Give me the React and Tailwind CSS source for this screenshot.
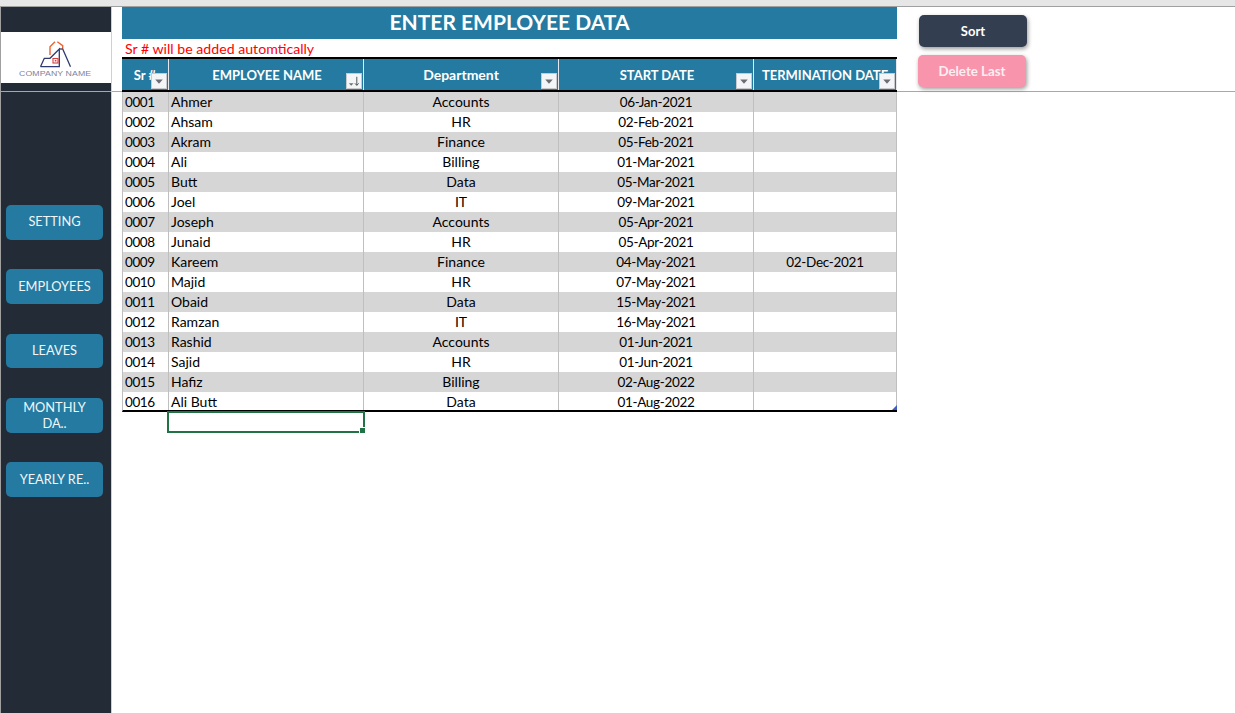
const employees = [
  ['0001', 'Ahmer', 'Accounts', '06-Jan-2021', ''],
  ['0002', 'Ahsam', 'HR', '02-Feb-2021', ''],
  ['0003', 'Akram', 'Finance', '05-Feb-2021', ''],
  ['0004', 'Ali', 'Billing', '01-Mar-2021', ''],
  ['0005', 'Butt', 'Data', '05-Mar-2021', ''],
  ['0006', 'Joel', 'IT', '09-Mar-2021', ''],
  ['0007', 'Joseph', 'Accounts', '05-Apr-2021', ''],
  ['0008', 'Junaid', 'HR', '05-Apr-2021', ''],
  ['0009', 'Kareem', 'Finance', '04-May-2021', '02-Dec-2021'],
  ['0010', 'Majid', 'HR', '07-May-2021', ''],
  ['0011', 'Obaid', 'Data', '15-May-2021', ''],
  ['0012', 'Ramzan', 'IT', '16-May-2021', ''],
  ['0013', 'Rashid', 'Accounts', '01-Jun-2021', ''],
  ['0014', 'Sajid', 'HR', '01-Jun-2021', ''],
  ['0015', 'Hafiz', 'Billing', '02-Aug-2022', ''],
  ['0016', 'Ali Butt', 'Data', '01-Aug-2022', ''],
]

const navItems = [
  { label: 'SETTING', cls: 'h-[35px] pb-[1px]' },
  { label: 'EMPLOYEES', cls: 'h-[35px] mt-[29px]' },
  { label: 'LEAVES', cls: 'h-[34px] mt-[30px] pb-[1px]' },
  { label: 'MONTHLY DA..', cls: 'h-[35px] mt-[30px] pb-[1px] px-[14px] leading-[16px]' },
  { label: 'YEARLY RE..', cls: 'h-[35px] mt-[29px]' },
]

// Excel autofilter dropdown, with the sort arrow on the sorted column
function FilterButton({ sorted }) {
  return (
    <div className="absolute right-[1px] bottom-[1px] w-[16px] h-[16px] bg-[#f4f5f7] border border-[#c6c9ce] flex items-center justify-center">
      <svg width="14" height="14" viewBox="0 0 15 15">
        {sorted ? (
          <>
            <path d="M2 10h5l-2.500 2.500z" fill="#6b6f75" />
            <path d="M10.500 3v9M8.500 10l2 2.200 2-2.200" fill="none" stroke="#45494f" strokeWidth="1" />
          </>
        ) : (
          <path d="M3.500 6h8L7.500 10.500z" fill="#6b6f75" />
        )}
      </svg>
    </div>
  )
}

function Logo() {
  return (
    <div className="flex flex-col items-center pt-[3px]">
      <svg width="33" height="27" viewBox="0 0 33 27" className="mb-[1px]">
        <path d="M10 14V5.700L15 .7M17.300 .7l5.400 4V8" fill="none" stroke="#f0622f" strokeWidth="1.400" />
        <path d="M.5 25.700L4.300 17.300H10L19.300 8V25.700H.5M22.700 8L30.500 25.700" fill="none" stroke="#2f3a73" strokeWidth="1.300" />
        <path d="M19.300 8H22.700" fill="none" stroke="#2f3a73" strokeWidth="1.300" />
        <rect x="13" y="17.500" width="5" height="4.500" fill="none" stroke="#d93d3d" strokeWidth="1.100" />
        <rect x="14.800" y="19" width="1.600" height="1.500" fill="#d93d3d" />
      </svg>
      <div className="font-['Liberation_Sans',sans-serif] text-[8px] leading-[9px] tracking-[0.1px] text-[#7d82a0] scale-x-[1.09] -translate-x-[1px]">
        COMPANY NAME
      </div>
    </div>
  )
}

function Sidebar() {
  return (
    <aside className="w-[112px] shrink-0 bg-[#222b36] border-l border-l-[#a0a0a0] border-r border-r-[#d0d0d0]">
      <div className="h-[85px] pt-[25px] border-b border-[#a8a8a8]">
        <div className="h-[51px] bg-white flex items-center justify-center">
          <Logo />
        </div>
      </div>
      <nav className="pt-[113px] pl-[5px] flex flex-col w-[102px]">
        {navItems.map(item => (
          <button
            key={item.label}
            className={`${item.cls} w-[97px] bg-[#247aa0] rounded-[5px] text-[#f2f6f8] text-[12.800px] text-center`}
          >
            {item.label}
          </button>
        ))}
      </nav>
    </aside>
  )
}

function HeaderCell({ width, children, sorted, pad = 'pt-[2px]' }) {
  return (
    <div className={`${width} ${pad} relative h-full shrink-0 border-r border-[#e4e8ec] flex items-center justify-center overflow-hidden whitespace-nowrap`}>
      {children}
      <FilterButton sorted={sorted} />
    </div>
  )
}

export default function App() {
  return (
    <div className="w-[1235px] h-[713px] overflow-hidden bg-white font-['Lato',sans-serif] text-[14px] text-black flex flex-col">
      <div className="h-[7px] shrink-0 bg-[#e6e6e6] border-b border-[#a0a0a0]" />
      <div className="flex flex-1 min-h-0">
        <Sidebar />
        <main className="flex-1 min-w-0">
          {/* frozen panes: title, note, header row and the two macro buttons */}
          <div className="h-[85px] flex border-b border-[#a8a8a8]">
            <div className="w-[775px] ml-[10px] shrink-0">
              <h1 className="h-[32px] bg-[#247aa0] text-white text-[21px] font-bold text-center leading-[30px]">
                ENTER EMPLOYEE DATA
              </h1>
              <div className="h-[18px] pl-[3px] pt-[1px] text-[#ff0000] text-[14.150px] leading-[18px]">
                Sr # will be added automtically
              </div>
              <div className="h-[35px] bg-[#247aa0] border-t-2 border-b-2 border-black flex text-white text-[13px] font-bold">
                <HeaderCell width="w-[47px]">Sr #</HeaderCell>
                <HeaderCell width="w-[195px]" pad="pt-[2px] pl-[2px]" sorted>EMPLOYEE NAME</HeaderCell>
                <HeaderCell width="w-[195px]" pad="pb-[1px]"><span className="text-[14px]">Department</span></HeaderCell>
                <HeaderCell width="w-[195px]" pad="pt-[2px] pl-[2px]">START DATE</HeaderCell>
                <HeaderCell width="w-[143px]">TERMINATION DATE</HeaderCell>
              </div>
            </div>
            <div className="ml-[22px] pt-[8px] flex flex-col items-start text-[13px] font-bold">
              <button className="w-[108px] h-[32px] pt-[2px] bg-[#343e51] rounded-[5px] text-white shadow-[1px_2px_4px_rgba(0,0,0,0.4)]">
                Sort
              </button>
              <button className="w-[108px] h-[32px] pt-[2px] -ml-[1px] mt-[8px] bg-[#f895ad] rounded-[5px] text-[13.300px] text-[#fdeef2] shadow-[1px_2px_4px_rgba(0,0,0,0.4)]">
                Delete Last
              </button>
            </div>
          </div>

          <div className="w-[775px] ml-[10px]">
            {employees.map((row, i) => (
              <div
                key={row[0]}
                className={`relative h-[20px] flex leading-[20px] border-l border-[#bfbfbf] ${i % 2 === 0 ? 'bg-[#d6d6d6]' : 'bg-white'} ${i === employees.length - 1 ? 'border-b-2 border-b-black' : ''}`}
              >
                <div className="w-[46px] pl-[2px] border-r border-[#bfbfbf] text-[13.500px] tracking-[-0.4px]">{row[0]}</div>
                <div className="w-[195px] pl-[2px] border-r border-[#bfbfbf]">{row[1]}</div>
                <div className="w-[195px] text-center border-r border-[#bfbfbf]">{row[2]}</div>
                <div className="w-[195px] text-center border-r border-[#bfbfbf] text-[13.500px] tracking-[-0.3px]">{row[3]}</div>
                <div className="w-[143px] text-center border-r border-[#bfbfbf] text-[13.500px] tracking-[-0.3px]">{row[4]}</div>
                {i === employees.length - 1 && (
                  <div className="absolute right-0 bottom-0 w-[5px] h-[5px] bg-[#3f5bc4] [clip-path:polygon(100%_0,100%_100%,0_100%)]" />
                )}
              </div>
            ))}
            {/* selected cell */}
            <div className="relative -mt-[1px] ml-[45px] w-[198px] h-[22px] border-2 border-[#217346]">
              <div className="absolute -right-[3px] -bottom-[3px] w-[5px] h-[5px] bg-[#217346] border border-white box-content" />
            </div>
          </div>
        </main>
      </div>
    </div>
  )
}
